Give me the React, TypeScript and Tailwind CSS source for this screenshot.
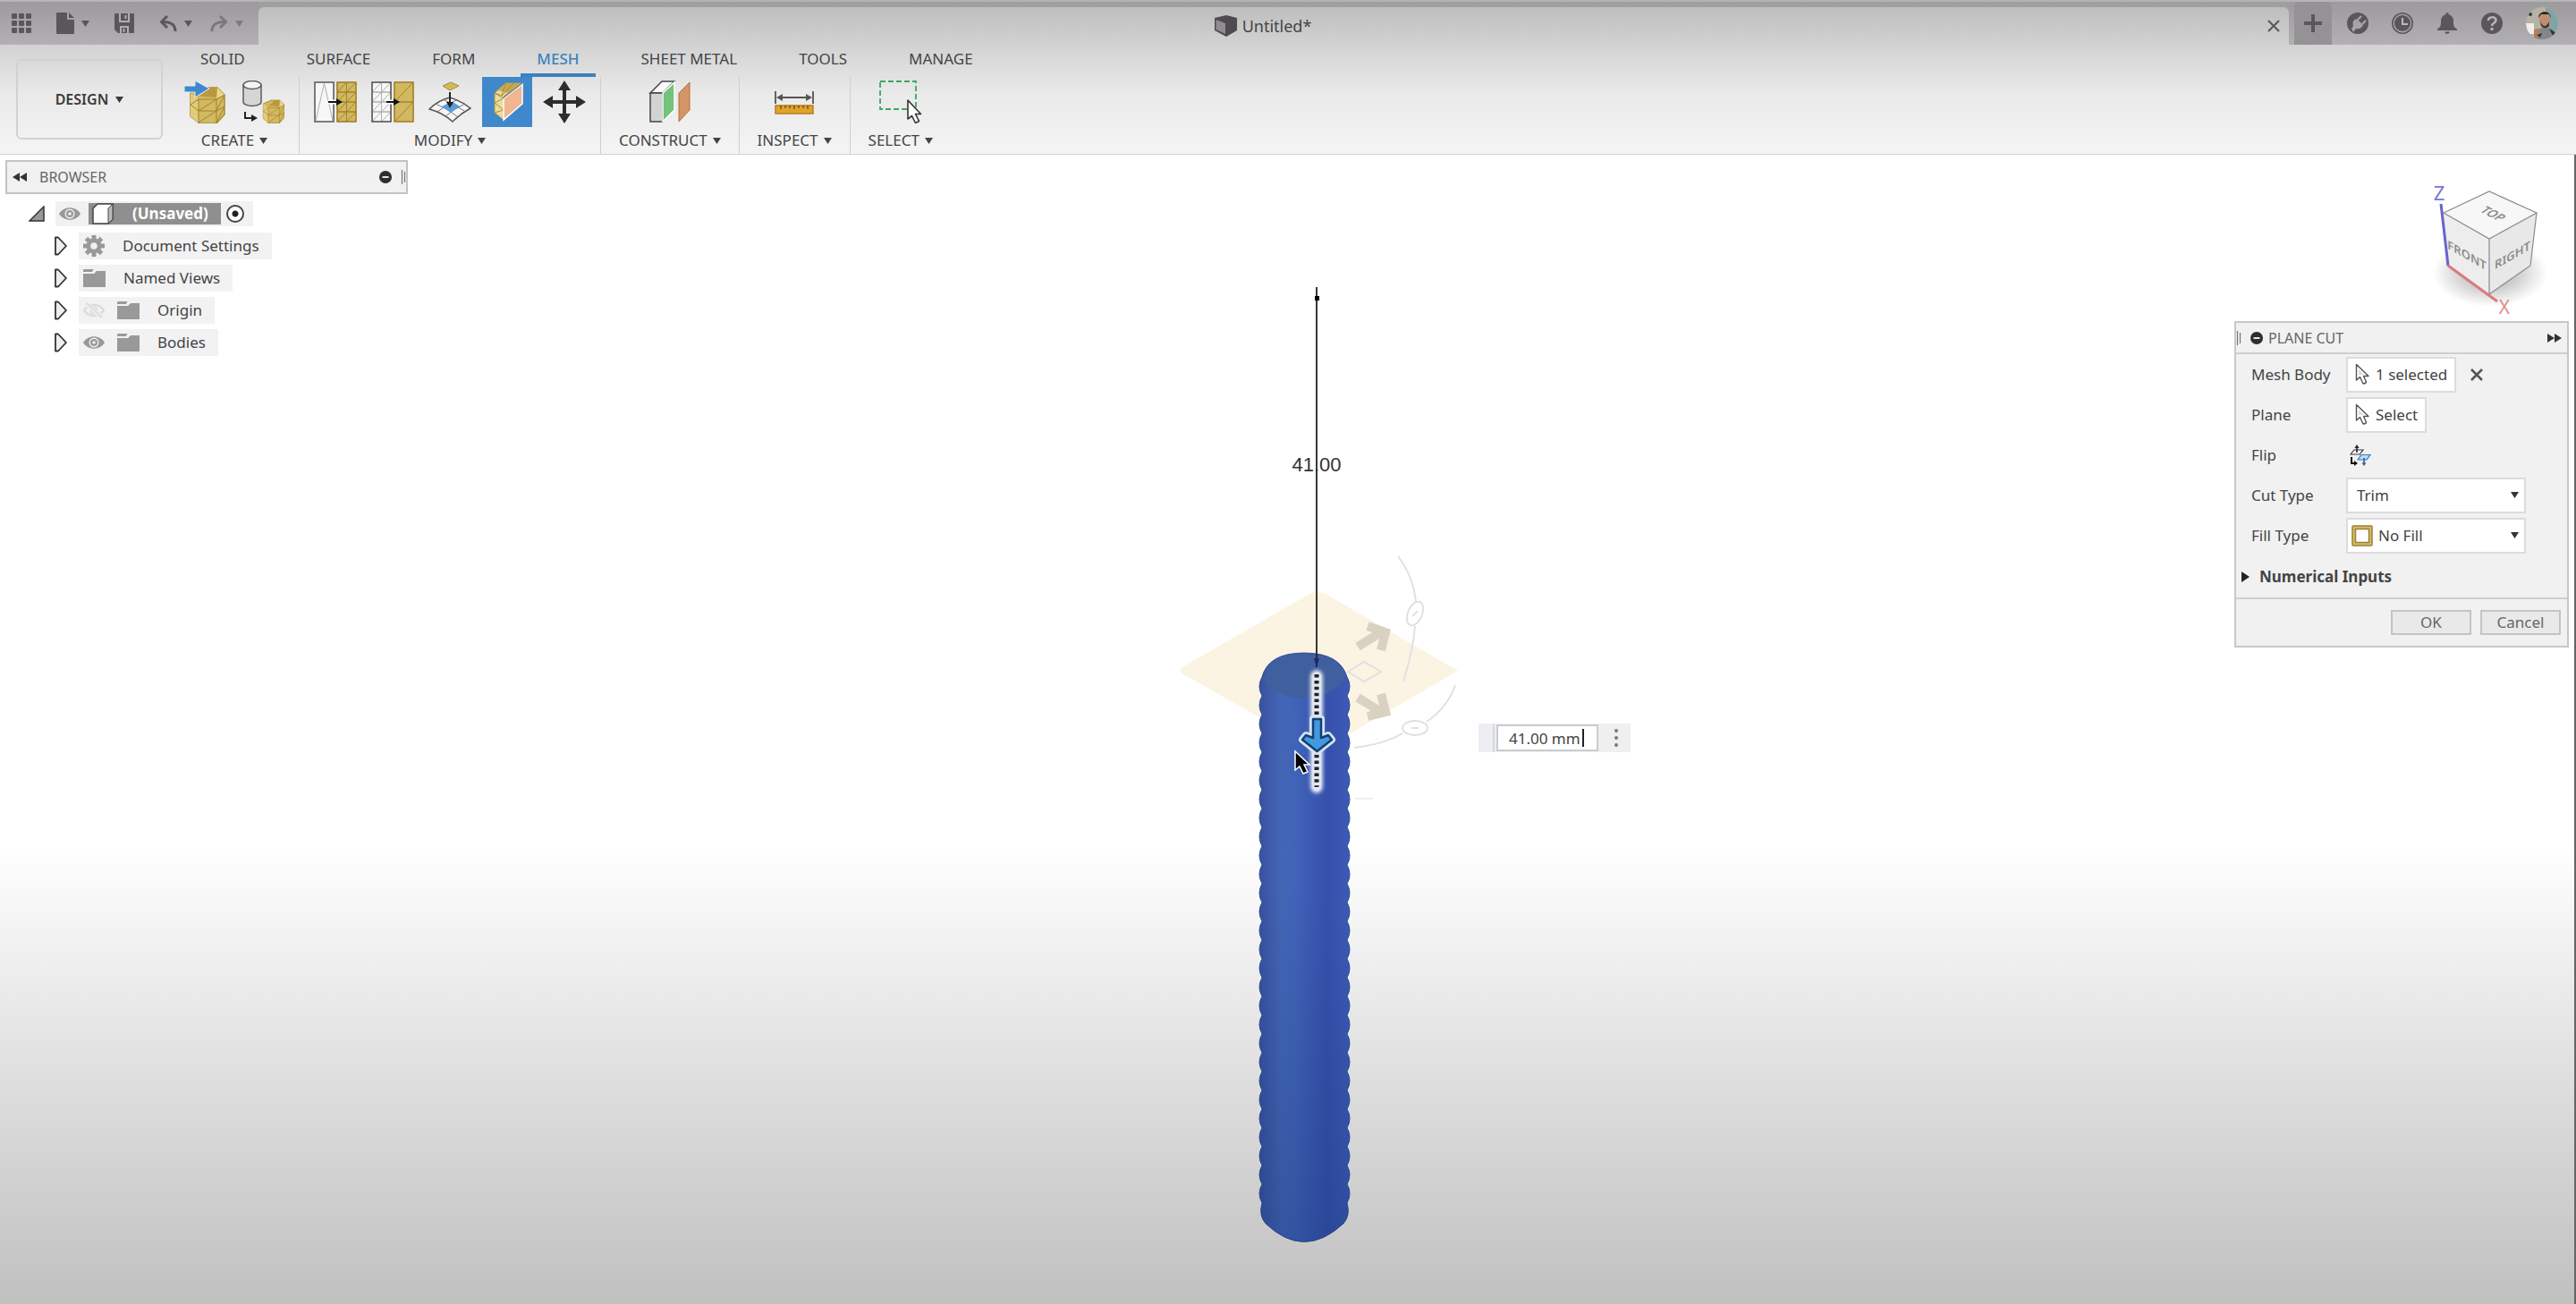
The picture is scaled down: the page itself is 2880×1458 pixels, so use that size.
import { ReactNode } from "react";

const TABS = ["SOLID", "SURFACE", "FORM", "MESH", "SHEET METAL", "TOOLS", "MANAGE"];

/* ---------- small glyphs ---------- */

const Caret = ({ className = "" }: { className?: string }) => (
  <svg viewBox="0 0 9 7" className={`w-[9px] h-[7px] shrink-0 ${className}`}>
    <path d="M0 0h9L4.500 7z" fill="currentColor" />
  </svg>
);

const MinusDot = () => (
  <svg viewBox="0 0 14 14" className="w-3.5 h-3.5 shrink-0">
    <circle cx="7" cy="7" r="7" fill="#2e2e2e" />
    <path d="M3.500 7h7" stroke="#e8e8e8" strokeWidth="2" />
  </svg>
);

const Grip = () => (
  <svg viewBox="0 0 6 18" className="w-1.5 h-[18px] shrink-0">
    <path d="M1.500 1v16M4.500 3v12" stroke="#777" strokeWidth="1.200" />
  </svg>
);

const Rewind = ({ flip = false }: { flip?: boolean }) => (
  <svg viewBox="0 0 16 10" className={`w-4 h-2.5 shrink-0 ${flip ? "rotate-180" : ""}`}>
    <path d="M8 0v10L0 5zM16 0v10L8 5z" fill="#333" />
  </svg>
);

const Eye = () => (
  <svg viewBox="0 0 24 18" className="w-6 h-[18px] shrink-0">
    <path d="M0 9C5 0 19 0 24 9 19 18 5 18 0 9z" fill="#999" />
    <circle cx="12" cy="9" r="5.500" fill="#efefef" />
    <circle cx="12" cy="9" r="4" fill="#999" />
    <circle cx="12" cy="9" r="1.800" fill="#efefef" />
  </svg>
);

const EyeOff = () => (
  <svg viewBox="0 0 24 18" className="w-6 h-[18px] shrink-0">
    <path d="M1 9C6 1 18 1 23 9 18 17 6 17 1 9z" fill="none" stroke="#dcdcdc" strokeWidth="2.500" />
    <circle cx="12" cy="9" r="3.500" fill="none" stroke="#dcdcdc" strokeWidth="2" />
    <path d="M3 1l18 16" stroke="#efefef" strokeWidth="5" />
    <path d="M4 1l17 16" stroke="#dcdcdc" strokeWidth="2" />
  </svg>
);

const Folder = () => (
  <svg viewBox="0 0 25 20" className="w-[25px] h-5 shrink-0">
    <path d="M0 5h12l3-3h10v18H0z" fill="#999" />
    <path d="M0 3V1q0-1 1-1h10.500L10 3z" fill="#999" />
  </svg>
);

const Gear = () => (
  <svg viewBox="-12 -12 24 24" className="w-6 h-6 shrink-0">
    {[0, 45, 90, 135].map((a) => (
      <rect key={a} x="-2.500" y="-12" width="5" height="24" fill="#999" transform={`rotate(${a})`} />
    ))}
    <circle r="8.500" fill="#999" />
    <circle r="3.800" fill="#efefef" />
  </svg>
);

const Expander = () => (
  <svg viewBox="0 0 16 22" className="w-4 h-[22px] shrink-0">
    <path d="M2 1.500h3L14 11 5 20.500H2z" fill="#eee" stroke="#333" strokeWidth="1.800" strokeLinejoin="round" />
  </svg>
);

const Pointer = () => (
  <svg viewBox="0 0 17 25" className="w-[17px] h-[25px] shrink-0">
    <path
      d="M1.500 1.500v17.500l4-3.500 3.500 7.500q3 0 3.500-2L9.500 14.500h5.500z"
      fill="#fff"
      stroke="#555"
      strokeWidth="1.400"
      strokeLinejoin="round"
    />
    <path d="M4 13V7l6 6" fill="#ddd" />
  </svg>
);

/* ---------- title bar ---------- */

const BarButton = ({ label, children }: { label: string; children: ReactNode }) => (
  <button type="button" aria-label={label} className="flex items-center gap-2 text-[#59575a]">
    {children}
  </button>
);

const QuickAccess = () => (
  <div className="flex items-center w-[289px] pl-[13px] bg-linear-to-b from-[#9c9a9c] to-[#b2b0b2]">
    <BarButton label="Data panel">
      <svg viewBox="0 0 22 22" className="w-[22px] h-[22px]" fill="currentColor">
        {[0, 8, 16].map((y) =>
          [0, 8, 16].map((x) => <rect key={`${x}-${y}`} x={x} y={y} width="6" height="6" rx="1" />)
        )}
      </svg>
    </BarButton>
    <div className="flex items-center gap-7 pl-7">
      <BarButton label="File">
        <svg viewBox="0 0 20 24" className="w-5 h-6" fill="currentColor">
          <path d="M0 1q0-1 1-1h11v8h8v15q0 1-1 1H1q-1 0-1-1z" />
          <path d="M14 0l6 6h-6z" />
        </svg>
        <Caret />
      </BarButton>
      <BarButton label="Save">
        <svg viewBox="0 0 22 22" className="w-[22px] h-[22px]">
          <path d="M1 0h20q1 0 1 1v20q0 1-1 1H4l-4-4V1q0-1 1-1z" fill="currentColor" />
          <path d="M6 0v9h10V0M7 22v-7h8v7M12.500 2v4M10.500 17v4" fill="none" stroke="#b0aeb0" strokeWidth="2" />
        </svg>
      </BarButton>
      <BarButton label="Undo">
        <svg viewBox="0 0 20 19" className="w-5 h-[19px]" fill="none" stroke="currentColor" strokeWidth="3">
          <path d="M9 1L2.500 7.500 9 14" />
          <path d="M3 7.500C12 7 18 10 18 18" />
        </svg>
        <Caret />
      </BarButton>
      <button type="button" aria-label="Redo" className="flex items-center gap-2 -ml-2 text-[#7b797b]">
        <svg viewBox="0 0 20 19" className="w-5 h-[19px]" fill="none" stroke="currentColor" strokeWidth="3">
          <path d="M11 1l6.500 6.500L11 14" />
          <path d="M17 7.500C8 7 2 10 2 18" />
        </svg>
        <Caret />
      </button>
    </div>
  </div>
);

const Avatar = () => (
  <svg viewBox="0 0 36 36" className="w-9 h-9">
    <clipPath id="face">
      <circle cx="18" cy="18" r="18" />
    </clipPath>
    <g clipPath="url(#face)">
      <path d="M0 0h36v36H0z" fill="#b5b2a6" />
      <path d="M22 0h14v36H24z" fill="#7fa5a4" />
      <path d="M0 18h9v12H2z" fill="#eee" />
      <path d="M9 36c1-9 5-13 11-13 8-1 14 4 15 13z" fill="#85868a" />
      <ellipse cx="21" cy="14" rx="6" ry="8" fill="#c18d71" />
      <path d="M14 12c0-9 14-9 14 0l-2-4h-9z" fill="#2b211d" />
      <path d="M16 16q5 10 10 0v5q-5 5-9 0z" fill="#4d342a" />
      <path d="M9 25l5-1 2 5-4 7H9z" fill="#b27d5f" />
      <path d="M26 24l8 5-4 3zM12 31l6-2-2 5z" fill="#363437" />
      <circle cx="5" cy="8" r="2" fill="#3b3434" />
    </g>
  </svg>
);

const StatusIcons = () => (
  <div className="flex items-center flex-1 pl-1.5 bg-linear-to-b from-[#9c9a9c] to-[#b2b0b2] text-[#59575a]">
    <button
      type="button"
      aria-label="New design"
      className="flex items-center self-stretch justify-center w-[42px] rounded-t-md bg-[#949294]"
    >
      <svg viewBox="0 0 20 20" className="w-5 h-5">
        <path d="M10 0v20M0 10h20" stroke="currentColor" strokeWidth="4" />
      </svg>
    </button>
    <div className="flex items-center gap-[26px] pl-[17px]">
      <button type="button" aria-label="Extensions">
        <svg viewBox="0 0 24 24" className="w-6 h-6">
          <circle cx="12" cy="12" r="12" fill="currentColor" />
          <path d="M7 22l3-5 3-3 4 2 3-3" fill="none" stroke="currentColor" strokeWidth="2" />
          <path d="M5 18l2-3q-2-7 4-8l7 7q-2 5-8 4l-3 4z" fill="#a6a4a6" />
          <path d="M12 8l4-4M17 13l4-4" stroke="#a6a4a6" strokeWidth="2.400" />
        </svg>
      </button>
      <button type="button" aria-label="Job status">
        <svg viewBox="0 0 24 24" className="w-6 h-6">
          <circle cx="12" cy="12" r="11.200" fill="none" stroke="currentColor" strokeWidth="1.600" />
          <circle cx="12" cy="12" r="9" fill="currentColor" />
          <path d="M12 6v7h6" fill="none" stroke="#bbb9bb" strokeWidth="2" />
        </svg>
      </button>
      <button type="button" aria-label="Notifications">
        <svg viewBox="0 0 24 24" className="w-6 h-6" fill="currentColor">
          <path d="M12 0q2 0 2 2.500c4 1 5 4 5 8 0 5 1 6 4 8v1.500H1v-1.500c3-2 4-3 4-8 0-4 1-7 5-8Q10 0 12 0z" />
          <path d="M9 21.500h6q-1 2.500-3 2.500t-3-2.500z" />
        </svg>
      </button>
      <button type="button" aria-label="Help">
        <svg viewBox="0 0 24 24" className="w-6 h-6">
          <circle cx="12" cy="12" r="12" fill="currentColor" />
          <path d="M8 9c0-5 8.500-5 8.500-.5 0 3.500-4.500 3-4.500 6.500" fill="none" stroke="#b5b3b5" strokeWidth="2.600" />
          <circle cx="12" cy="18.500" r="1.800" fill="#b5b3b5" />
        </svg>
      </button>
      <button type="button" aria-label="Account">
        <Avatar />
      </button>
    </div>
  </div>
);

const TitleBar = () => (
  <div className="flex items-stretch h-[50px] border-t-2 border-[#b5b3b5] shadow-[inset_0_2px_0_#858385]">
    <QuickAccess />
    <div className="flex flex-1 bg-[#a09ea0]">
      <div className="flex items-center flex-1 pr-2.5 mt-1.5 rounded-tl-md rounded-tr-md bg-linear-to-b from-[#bdbdbd] to-[#d2d2d2]">
        <div className="flex items-center justify-center flex-1 gap-1.5">
          <svg viewBox="0 0 25 24" className="w-[25px] h-6">
            <path d="M0 3L13 0l12 3v14l-12 7-13-7z" fill="#4d4b4d" />
            <path d="M1.500 5l10.500 4v12L1.500 16z" fill="#8e8c8e" />
          </svg>
          <span className="text-lg text-[#444]">Untitled*</span>
        </div>
        <button type="button" aria-label="Close document">
          <svg viewBox="0 0 14 14" className="w-3.5 h-3.5">
            <path d="M1 1l12 12M13 1L1 13" stroke="#5a5a5a" strokeWidth="2.200" />
          </svg>
        </button>
      </div>
    </div>
    <div className="flex w-[321px]">
      <StatusIcons />
    </div>
  </div>
);

/* ---------- ribbon icons ---------- */

const MeshLump = () => (
  <>
    <path d="M7 14l14-6h16l8 8v22l-9 10H17L7 40z" fill="#d2b962" stroke="#a98c35" strokeWidth="1.500" />
    <path d="M7 20l5-3 24 2 9-3-8-8-9 0-9 8z" fill="#b9993f" />
    <path d="M37 8l8 8-9 4z" fill="#ead78d" />
    <path d="M7 14l9 7v27l-9-8z" fill="#e2cc7b" />
    <path
      d="M16 21h20l9-5M36 20v28M16 21v27M16 34l20-13M16 34h20l9-5M16 47l20-13M7 27l9 7M7 27l9-6M36 34l9-18M36 47l9-18"
      fill="none"
      stroke="#a0822d"
      strokeWidth="1"
    />
  </>
);

const InsertMesh = () => (
  <svg viewBox="0 0 48 48" className="w-12 h-12">
    <MeshLump />
    <path d="M0 6h12V0l16 9-16 10v-6H0z" fill="#3d88d0" stroke="#eee" strokeWidth="1" />
  </svg>
);

const Tessellate = () => (
  <svg viewBox="0 0 48 48" className="w-12 h-12">
    <path d="M2 5v19a10 4.500 0 0 0 20 0V5z" fill="#d5d5d8" stroke="#5c5c5c" strokeWidth="1.500" />
    <ellipse cx="12" cy="5" rx="10" ry="4.500" fill="#f4f4f4" stroke="#5c5c5c" strokeWidth="1.500" />
    <path d="M4 35v7h8" fill="none" stroke="#222" strokeWidth="2" />
    <path d="M11 38l7 4-7 4z" fill="#222" />
    <g transform="translate(20 17) scale(.62 .64)">
      <MeshLump />
    </g>
  </svg>
);

const triangles = (x: number, w: number, cols: number, rows: number) => {
  const cw = w / cols;
  const ch = 44 / rows;
  let d = "";
  for (let r = 0; r < rows; r++) {
    for (let c = 0; c < cols; c++) {
      const l = x + c * cw;
      const t = 2 + r * ch;
      d += `M${l} ${t}h${cw}v${ch}h${-cw}zM${l} ${t + ch}L${l + cw} ${t}`;
    }
  }
  return d;
};

const Remesh = () => (
  <svg viewBox="0 0 48 48" className="w-12 h-12">
    <rect x="1" y="2" width="21" height="44" fill="#f7f7f7" stroke="#555" strokeWidth="1.500" />
    <path d="M2 45L11.500 3 21 45" fill="none" stroke="#b0b0b0" strokeWidth="1" />
    <rect x="26" y="2" width="21" height="44" fill="#d2b85f" stroke="#a98c35" strokeWidth="1.500" />
    <path d={triangles(26, 21, 2, 4)} fill="none" stroke="#a08330" strokeWidth="1" />
    <path d="M16 24h10" stroke="#fff" strokeWidth="5" />
    <path d="M16 24h10" stroke="#111" strokeWidth="2" />
    <path d="M25 20l7 4-7 4z" fill="#111" />
  </svg>
);

const Reduce = () => (
  <svg viewBox="0 0 48 48" className="w-12 h-12">
    <rect x="1" y="2" width="21" height="44" fill="#f7f7f7" />
    <path d={triangles(1, 21, 2, 4)} fill="none" stroke="#b0b0b0" strokeWidth="1" />
    <rect x="1" y="2" width="21" height="44" fill="none" stroke="#555" strokeWidth="1.500" />
    <rect x="26" y="2" width="21" height="44" fill="#d2b85f" stroke="#a98c35" strokeWidth="1.500" />
    <path d={triangles(26, 21, 1, 2)} fill="none" stroke="#a08330" strokeWidth="1" />
    <path d="M17 24h10" stroke="#fff" strokeWidth="5" />
    <path d="M17 24h10" stroke="#111" strokeWidth="2" />
    <path d="M25 20l7 4-7 4z" fill="#111" />
  </svg>
);

const DirectEdit = () => (
  <svg viewBox="0 0 48 48" className="w-12 h-12">
    <path d="M16 6l9-4 9 4-10 5z" fill="#d2b85f" stroke="#a98c35" strokeWidth="1" />
    <path d="M1 32q10-10 23-13 13 4 23 12-11 6-20 15Q16 36 1 32z" fill="#f6f6f6" stroke="#555" strokeWidth="1.500" />
    <path
      d="M8 26q12 5 24 14M16 21q12 5 24 13M33 21Q20 27 10 35M41 26Q28 32 19 40"
      fill="none"
      stroke="#777"
      strokeWidth="1"
    />
    <path d="M15 29l8-4h6l6 4-10 7z" fill="#5a9bdc" />
    <path d="M24 13v13" stroke="#222" strokeWidth="2" />
    <path d="M20 24h8l-4 7z" fill="#222" />
  </svg>
);

const PlaneCutIcon = () => (
  <svg viewBox="0 0 48 48" className="w-12 h-12">
    <path d="M10 14L22 3h18L20 18v26l-10-8z" fill="#ecdb9d" stroke="#b5973e" strokeWidth="1" />
    <path d="M14 11l9-8h17L25 14z" fill="#c5a850" />
    <path d="M10 14l10 6M10 25l10-5M10 25l10 8M10 36l10-3M22 3l-4 14M31 3L18 17M10 14l8 3" fill="none" stroke="#a98c35" />
    <path d="M20 20L41 4v22L20 44z" fill="#f1b58f" stroke="#fff" strokeWidth="1.500" />
    <path d="M19 20L41 3" stroke="#3a6ea5" strokeWidth="1" />
  </svg>
);

const MoveIcon = () => (
  <svg viewBox="0 0 48 48" className="w-12 h-12">
    <path d="M24 8v32M8 24h32" stroke="#2d2d2d" strokeWidth="4" />
    <path d="M24 0l7 11H17zM24 48l7-11H17zM0 24l11-7v14zM48 24l-11-7v14z" fill="#2d2d2d" />
  </svg>
);

const ConstructIcon = () => (
  <svg viewBox="0 0 48 48" className="w-12 h-12">
    <path d="M2 14L15 1h14L16 14z" fill="#fafafa" stroke="#444" strokeWidth="1.500" />
    <path d="M2 14h14v32H2z" fill="#d3d3d3" stroke="#444" strokeWidth="1.500" />
    <path d="M16 14L29 2v31L16 46z" fill="#74c27c" stroke="#fff" strokeWidth="1.500" />
    <path d="M34 14L46 2v31L34 46z" fill="#d59468" stroke="#b9713f" strokeWidth="1" />
  </svg>
);

const InspectIcon = () => (
  <svg viewBox="0 0 48 48" className="w-12 h-12">
    <path d="M3 12v14M45 12v14M6 19h36" stroke="#555" strokeWidth="1.800" />
    <path d="M4 19l7-4v8zM44 19l-7-4v8z" fill="#555" />
    <rect x="3" y="28" width="42" height="9" fill="#e0a22b" stroke="#b5801a" strokeWidth="1.500" />
    <path d="M9 28v4M14 28v3M19 28v3M24 28v4M29 28v3M34 28v3M39 28v4" stroke="#5b4310" strokeWidth="1.200" />
  </svg>
);

const SelectIcon = () => (
  <svg viewBox="0 0 48 48" className="w-12 h-12">
    <rect x="1" y="1" width="40" height="31" fill="none" stroke="#3fa565" strokeWidth="1.800" strokeDasharray="6 3" />
    <path
      d="M32 22v21l4.500-3.500 4 8 4-2-4-8h6z"
      fill="#fff"
      stroke="#333"
      strokeWidth="1.600"
      strokeLinejoin="round"
    />
  </svg>
);

/* ---------- ribbon ---------- */

interface Tool {
  name: string;
  icon: ReactNode;
  active?: boolean;
}

interface Group {
  label: string;
  tools: Tool[];
}

const GROUPS: Group[] = [
  {
    label: "CREATE",
    tools: [
      { name: "Insert Mesh", icon: <InsertMesh /> },
      { name: "Tessellate", icon: <Tessellate /> },
    ],
  },
  {
    label: "MODIFY",
    tools: [
      { name: "Remesh", icon: <Remesh /> },
      { name: "Reduce", icon: <Reduce /> },
      { name: "Direct Edit", icon: <DirectEdit /> },
      { name: "Plane Cut", icon: <PlaneCutIcon />, active: true },
      { name: "Move", icon: <MoveIcon /> },
    ],
  },
  { label: "CONSTRUCT", tools: [{ name: "Offset Plane", icon: <ConstructIcon /> }] },
  { label: "INSPECT", tools: [{ name: "Measure", icon: <InspectIcon /> }] },
  { label: "SELECT", tools: [{ name: "Window Selection", icon: <SelectIcon /> }] },
];

const Ribbon = () => (
  <div className="flex gap-2 pl-[18px] bg-linear-to-b from-[#d2d2d2] via-[#eaeaea] via-45% to-[#f4f4f4] border-b border-[#d0d0d0]">
    <button
      type="button"
      className="flex items-center justify-center gap-2 mt-4 mb-4 w-[164px] h-[90px] rounded-md border-2 border-[#d2d2d2] text-base font-semibold text-[#3a3a3a]"
    >
      DESIGN <Caret />
    </button>
    <div className="flex flex-col">
      <nav className="flex gap-[33px] pl-4">
        {TABS.map((tab) => (
          <button
            type="button"
            key={tab}
            className={`px-[18px] h-9 text-[17px] leading-8 border-b-4 ${
              tab === "MESH" ? "text-[#3a83bd] font-medium border-[#3b82bd]" : "text-[#444] border-transparent"
            }`}
          >
            {tab}
          </button>
        ))}
      </nav>
      <div className="flex">
        {GROUPS.map((group) => (
          <section key={group.label} className="flex flex-col items-center px-3 border-r border-[#cfcfcf] last:border-r-0">
            <div className="flex gap-2">
              {group.tools.map((tool) => (
                <button
                  type="button"
                  key={tool.name}
                  aria-label={tool.name}
                  className={`flex items-center justify-center w-14 h-14 ${tool.active ? "bg-[#3f88cc]" : ""}`}
                >
                  {tool.icon}
                </button>
              ))}
            </div>
            <button type="button" className="flex items-center gap-1.5 px-2 text-[17px] leading-[30px] text-[#444]">
              {group.label} <Caret />
            </button>
          </section>
        ))}
      </div>
    </div>
  </div>
);

/* ---------- browser tree ---------- */

interface TreeItem {
  label: string;
  icons: ReactNode;
}

const TREE: TreeItem[] = [
  { label: "Document Settings", icons: <Gear /> },
  { label: "Named Views", icons: <Folder /> },
  {
    label: "Origin",
    icons: (
      <>
        <EyeOff />
        <Folder />
      </>
    ),
  },
  {
    label: "Bodies",
    icons: (
      <>
        <Eye />
        <Folder />
      </>
    ),
  },
];

const BrowserPanel = () => (
  <aside className="relative pt-1.5 pl-1.5 w-[456px]">
    <header className="flex items-center h-[38px] px-1.5 border-2 border-[#c4c4c4] bg-[#f1f1f1]">
      <Rewind />
      <h2 className="flex-1 pl-3.5 text-base text-[#666]">BROWSER</h2>
      <MinusDot />
      <span className="pl-2.5 -mr-1.5">
        <Grip />
      </span>
    </header>
    <ul className="pt-1 text-[17px] text-[#444]">
      <li className="flex items-center h-9 gap-3 pl-[26px]">
        <svg viewBox="0 0 18 18" className="w-[18px] h-[18px]">
          <path d="M1 17h16V1z" fill="#999" stroke="#333" strokeWidth="1.500" />
        </svg>
        <div className="flex items-center h-7 pl-1 pr-2.5 bg-[#f1f1f1]">
          <Eye />
          <div className="flex items-center h-6 pl-1 pr-3.5 ml-[9px] mr-1.5 bg-[#8f8f8f]">
            <svg viewBox="0 0 25 24" className="w-[25px] h-6">
              <path d="M1 6l5-5h17v17l-5 5H1z" fill="#fff" stroke="#444" strokeWidth="1.500" />
              <path d="M18 6l5-5v17l-5 5z" fill="#bbb" stroke="#444" />
            </svg>
            <span className="pl-5 font-bold leading-6 text-white">(Unsaved)</span>
          </div>
          <input
            type="radio"
            name="active-component"
            aria-label="Activate component"
            defaultChecked
            className="w-5 h-5 rounded-full appearance-none border-2 border-[#444] bg-[radial-gradient(circle,#222_0_3px,#fff_4px)]"
          />
        </div>
      </li>
      {TREE.map((item) => (
        <li key={item.label} className="flex items-center h-9 gap-3 pl-[54px]">
          <button type="button" aria-label={`Expand ${item.label}`}>
            <Expander />
          </button>
          <div className="flex items-center h-[30px] gap-3.5 pl-[5px] pr-3.5 bg-[#f2f2f2]">
            {item.icons}
            <span className="pl-1.5">{item.label}</span>
          </div>
        </li>
      ))}
    </ul>
  </aside>
);

/* ---------- plane cut dialog ---------- */

const FieldRow = ({ label, htmlFor, children }: { label: string; htmlFor: string; children: ReactNode }) => (
  <div className="flex items-center h-[45px]">
    <label htmlFor={htmlFor} className="w-[106px]">
      {label}
    </label>
    {children}
  </div>
);

const PlaneCutPanel = () => (
  <form className="w-[374px] border-2 border-[#c8c8c8] bg-[#f1f1f1] text-[17px] text-[#444]">
    <header className="flex items-center h-[35px] pr-1.5 border-b-2 border-[#cfcfcf]">
      <Grip />
      <span className="pl-2.5">
        <MinusDot />
      </span>
      <h2 className="flex-1 pl-1.5 text-base text-[#666]">PLANE CUT</h2>
      <Rewind flip />
    </header>
    <div className="pl-[17px]">
      <FieldRow label="Mesh Body" htmlFor="mesh-body">
        <button type="button" id="mesh-body" className="flex items-center h-10 gap-1.5 px-2 bg-white border-2 border-[#dcdcdc]">
          <Pointer /> 1 selected
        </button>
        <button type="button" aria-label="Clear selection" className="pl-4">
          <svg viewBox="0 0 14 14" className="w-3.5 h-3.5">
            <path d="M1 1l12 12M13 1L1 13" stroke="#555" strokeWidth="2.600" />
          </svg>
        </button>
      </FieldRow>
      <FieldRow label="Plane" htmlFor="plane">
        <button type="button" id="plane" className="flex items-center h-10 gap-1.5 px-2 bg-white border-2 border-[#dcdcdc]">
          <Pointer /> Select
        </button>
      </FieldRow>
      <FieldRow label="Flip" htmlFor="flip">
        <button type="button" id="flip" className="pl-1">
          <svg viewBox="0 0 24 24" className="w-6 h-6">
            <path d="M1 11l4-5h10l-4 5z" fill="#fff" stroke="#333" strokeWidth="1.200" />
            <path d="M8 9V3" stroke="#222" strokeWidth="1.600" />
            <path d="M5.500 4L8 0l2.500 4z" fill="#222" />
            <path d="M9 17l4-5.500h10L19 17z" fill="#b5def3" stroke="#3a76b5" strokeWidth="1.200" />
            <path d="M16 15v6" stroke="#2c5f9e" strokeWidth="1.600" />
            <path d="M13.500 20.500L16 24l2.500-3.500z" fill="#2c5f9e" />
            <path d="M2 14v7h3" fill="none" stroke="#111" strokeWidth="2" />
            <path d="M5 18l4 3-4 3z" fill="#111" />
          </svg>
        </button>
      </FieldRow>
      <FieldRow label="Cut Type" htmlFor="cut-type">
        <div className="relative">
          <select id="cut-type" className="w-[201px] h-10 pl-2.5 appearance-none bg-white border-2 border-[#dcdcdc]">
            <option>Trim</option>
          </select>
          <Caret className="absolute right-2 top-4 text-[#333] pointer-events-none" />
        </div>
      </FieldRow>
      <FieldRow label="Fill Type" htmlFor="fill-type">
        <div className="relative">
          <select id="fill-type" className="w-[201px] h-10 pl-[34px] appearance-none bg-white border-2 border-[#dcdcdc]">
            <option>No Fill</option>
          </select>
          <svg viewBox="0 0 24 24" className="absolute w-6 h-6 left-1.5 top-2 pointer-events-none">
            <rect x="1" y="1" width="22" height="22" rx="1" fill="#d3bd68" stroke="#9b8132" strokeWidth="1.500" />
            <rect x="4.500" y="4.500" width="15" height="15" fill="#fff" stroke="#9b8132" strokeWidth="1.500" />
          </svg>
          <Caret className="absolute right-2 top-4 text-[#333] pointer-events-none" />
        </div>
      </FieldRow>
    </div>
    <button type="button" className="flex items-center h-[47px] gap-[11px] pl-1.5 font-bold">
      <svg viewBox="0 0 9 12" className="w-[9px] h-3">
        <path d="M0 0l9 6-9 6z" fill="#222" />
      </svg>
      Numerical Inputs
    </button>
    <footer className="flex justify-end gap-2.5 pt-3 pb-3 pr-[7px] border-t-2 border-[#cfcfcf] text-[#666]">
      <button type="submit" className="w-[90px] h-7 leading-6 border-2 border-[#c4c4c4] bg-[#e9e9e9]">
        OK
      </button>
      <button type="button" className="w-[90px] h-7 leading-6 border-2 border-[#c4c4c4] bg-[#e9e9e9]">
        Cancel
      </button>
    </footer>
  </form>
);

/* ---------- viewport ---------- */

const ViewCube = () => (
  <svg viewBox="2700 200 180 160" className="w-[180px] h-40 font-['Noto_Sans',sans-serif]">
    <defs>
      <radialGradient id="cube-shadow">
        <stop offset=".4" stopColor="#000" stopOpacity=".22" />
        <stop offset="1" stopColor="#000" stopOpacity="0" />
      </radialGradient>
    </defs>
    <ellipse cx="2784" cy="305" rx="64" ry="38" fill="url(#cube-shadow)" />
    <path d="M2732 238l51-24 53 24-53 29z" fill="#f7f7f7" />
    <path d="M2732 238l51 29v62l-46-32z" fill="#ededed" />
    <path d="M2783 267l53-29-7 59-46 32z" fill="#e8e8e8" />
    <path
      d="M2732 238l51-24 53 24-53 29zM2783 267v62M2836 238l-7 59-46 32"
      fill="none"
      stroke="#8a8a8a"
      strokeWidth="1.200"
    />
    <path d="M2729 228l8 69" stroke="#6a62d0" strokeWidth="3" />
    <path d="M2737 297l55 40" stroke="#d97a80" strokeWidth="3" />
    <g fill="#8b8b8b" fontWeight="600" textAnchor="middle">
      <text transform="translate(2783 242) rotate(27) skewX(-28)" fontSize="13">
        TOP
      </text>
      <text transform="translate(2758 290) skewY(30)" fontSize="13">
        FRONT
      </text>
      <text transform="translate(2809 290) skewY(-30)" fontSize="13">
        RIGHT
      </text>
    </g>
    <text x="2727" y="224" fontSize="22" fill="#7b74d6" textAnchor="middle">
      Z
    </text>
    <text x="2800" y="351" fontSize="21" fill="#e58b90" textAnchor="middle">
      X
    </text>
  </svg>
);

// Outline of the knurled rod: scalloped on both sides, rounded foot.
const rodOutline = () => {
  const step = 21;
  const count = 28;
  let d = "M1411 757Q1418 730 1458 730T1506 757";
  for (let i = 0; i < count; i++) d += `q6 ${step / 2} 0 ${step}`;
  d += "q4 14-4 23q-44 41-87 0q-8-9-4-23";
  for (let i = 0; i < count; i++) d += `q-6 ${-step / 2} 0 ${-step}`;
  return d + "z";
};

const Scene = () => (
  <svg viewBox="1240 300 400 1110" className="w-[400px] h-[1110px]">
    <defs>
      <linearGradient id="rod">
        <stop offset="0" stopColor="#38529f" />
        <stop offset=".25" stopColor="#4466b6" />
        <stop offset=".4" stopColor="#4063b8" />
        <stop offset=".75" stopColor="#3650ac" />
        <stop offset="1" stopColor="#3c5bb6" />
      </linearGradient>
      <linearGradient id="rod-shade" x1="0" x2="0" y1="0" y2="1">
        <stop offset=".4" stopColor="#10306a" stopOpacity="0" />
        <stop offset="1" stopColor="#10306a" stopOpacity=".3" />
      </linearGradient>
      <filter id="glow" filterUnits="userSpaceOnUse" x="1450" y="730" width="44" height="180">
        <feGaussianBlur stdDeviation="2" />
      </filter>
    </defs>

    <path d="M1320 747l144-83q9-4 18 0l148 86-144 84q-11 6-22 0l-144-82z" fill="#fcf4e2" />

    <g fill="none" stroke="#e2dfe4" strokeWidth="2">
      <path d="M1563 622q17 22 20 51M1582 700q-2 26-13 62" />
      <ellipse cx="1582" cy="686" rx="8" ry="14" transform="rotate(22 1582 686)" fill="#fff" />
      <path d="M1627 766q-8 24-32 41M1568 820q-20 12-54 16" />
      <path d="M1515 893h20" stroke="#f0f0f0" />
      <ellipse cx="1582" cy="814" rx="14" ry="8" fill="#fff" />
      <path d="M1579 689l6-6M1578 814h8" />
      <path d="M1507 751l18-11 19 11-19 11z" />
    </g>
    <g fill="none" stroke="#d9d1c1" strokeWidth="10">
      <path d="M1518 723l26-16" />
      <path d="M1518 780l26 16" />
      <path d="M1529 700l20 7-5 20M1529 801l20-5-5-20" />
    </g>

    <path d={rodOutline()} fill="url(#rod)" stroke="#304a94" strokeWidth="1" />
    <path d={rodOutline()} fill="url(#rod-shade)" />
    <path d="M1412 760Q1418 731 1458 731T1505 757Q1488 780 1458 780T1412 760z" fill="#405f9e" />

    <path d="M1472 321v425" stroke="#222" strokeWidth="1.800" />
    <rect x="1470" y="331" width="5" height="5" fill="#000" />
    <path d="M1469 736h6l-3 10z" fill="#182b66" />
    <text
      x="1472"
      y="527"
      textAnchor="middle"
      fontSize="22"
      fill="#333"
      className="font-['Liberation_Sans',sans-serif]"
    >
      41.00
    </text>

    <path d="M1472 756v124" stroke="#fff" strokeWidth="13" strokeLinecap="round" filter="url(#glow)" />
    <path d="M1472 757v122" stroke="#e4e8f5" strokeWidth="9" strokeLinecap="round" />
    <path d="M1472 754v126" stroke="#222" strokeWidth="5" strokeDasharray="3.500 3.400" />
    <path
      d="M1468 804h9v21l8-3 4 5-16.500 13-16.500-13 4-5 8 3z"
      fill="#4199df"
      stroke="#d5e2f8"
      strokeWidth="8"
      strokeLinejoin="round"
    />
    <path
      d="M1468 804h9v21l8-3 4 5-16.500 13-16.500-13 4-5 8 3z"
      fill="#4199df"
      stroke="#14406e"
      strokeWidth="2.500"
      strokeLinejoin="round"
    />
    <path d="M1448 840v21l5-4 4 8 5-2-4-8h6z" fill="#000" stroke="#fff" strokeWidth="1.500" />
  </svg>
);

const DistanceInput = () => (
  <div className="flex items-center w-[170px] h-8 bg-[#efefef]">
    <span className="w-[18px] h-8 border-r-2 border-[#d5d8dd] bg-[#eceef2] mr-0.5" />
    <div className="relative">
      <input
        aria-label="Distance"
        defaultValue="41.00 mm"
        className="w-[114px] h-[30px] pl-3 bg-white border-2 border-[#c9ccd2] text-[17px] text-[#444]"
      />
      <span className="absolute w-0.5 h-5 bg-[#222] right-4 top-[5px]" />
    </div>
    <button type="button" aria-label="More options" className="pl-[18px]">
      <svg viewBox="0 0 4 20" className="w-1 h-5" fill="#777">
        <circle cx="2" cy="2" r="2" />
        <circle cx="2" cy="10" r="2" />
        <circle cx="2" cy="18" r="2" />
      </svg>
    </button>
  </div>
);

const App = () => (
  <div className="flex flex-col min-h-screen font-['Noto_Sans','Open_Sans',sans-serif]">
    <TitleBar />
    <Ribbon />
    <main className="relative flex-1 min-h-[1285px] overflow-hidden border-r-2 border-[#666] bg-linear-to-b from-white from-60% to-[#c0c0c0]">
      <div className="absolute -translate-x-1/2 left-1/2 top-[127px] ml-px">
        <Scene />
      </div>
      <div className="absolute left-1/2 top-[636px] ml-[214px]">
        <DistanceInput />
      </div>
      <div className="absolute right-0 top-[27px] -mr-0.5">
        <ViewCube />
      </div>
      <BrowserPanel />
      <div className="absolute right-1.5 top-[186px]">
        <PlaneCutPanel />
      </div>
    </main>
  </div>
);

export default App;
